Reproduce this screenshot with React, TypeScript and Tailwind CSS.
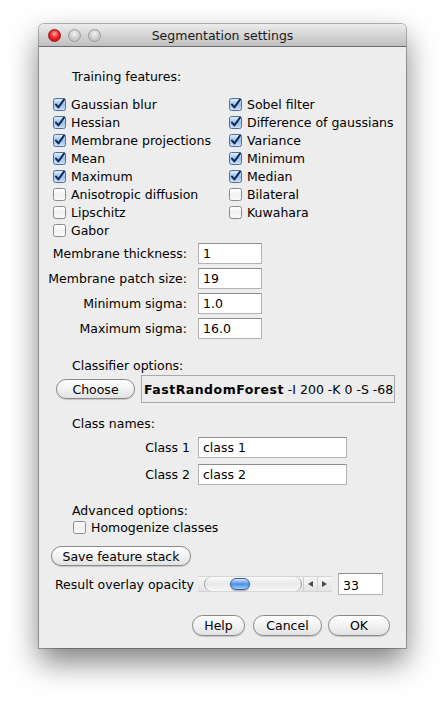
import React from "react"

const font = { fontFamily: '"DejaVu Sans", "Lucida Grande", Verdana, sans-serif' }

function CheckBox({ checked }: { checked: boolean }) {
  return (
    <svg width="13" height="13" viewBox="0 0 13 13" className="shrink-0">
      <defs>
        <linearGradient id="cbOn" x1="0" y1="0" x2="0" y2="1">
          <stop offset="0" stopColor="#e4effb" />
          <stop offset="0.5" stopColor="#9cc2ec" />
          <stop offset="1" stopColor="#cfe3f8" />
        </linearGradient>
        <linearGradient id="cbOff" x1="0" y1="0" x2="0" y2="1">
          <stop offset="0" stopColor="#ffffff" />
          <stop offset="0.5" stopColor="#f1f1f1" />
          <stop offset="1" stopColor="#fbfbfb" />
        </linearGradient>
      </defs>
      <rect
        x="0.5"
        y="0.5"
        width="12"
        height="12"
        rx="2"
        fill={checked ? "url(#cbOn)" : "url(#cbOff)"}
        stroke={checked ? "#50709a" : "#8a8a8a"}
      />
      {checked && (
        <path
          d="M3 6.6 L5.4 9.4 L11 1.6"
          fill="none"
          stroke="#0f2a58"
          strokeWidth="2"
          strokeLinecap="round"
          strokeLinejoin="round"
        />
      )}
    </svg>
  )
}

function Check({ label, checked }: { label: string; checked: boolean }) {
  return (
    <div className="flex items-center gap-[5px] h-[18px] whitespace-nowrap">
      <CheckBox checked={checked} />
      <span>{label}</span>
    </div>
  )
}

function AquaButton({ label, className }: { label: string; className: string }) {
  return (
    <div
      className={
        "flex items-center justify-center rounded-full border border-[#8a8a8a] bg-gradient-to-b from-[#ffffff] via-[#f2f2f2] to-[#e2e2e2] shadow-[0_1px_1px_rgba(0,0,0,0.18)] text-black " +
        className
      }
    >
      {label}
    </div>
  )
}

function Field({ value, className }: { value: string; className: string }) {
  return (
    <div
      className={
        "bg-white border border-[#b4b4b4] border-t-[#8e8e8e] pl-[4px] flex items-center text-black " + className
      }
    >
      {value}
    </div>
  )
}

function Light({ color }: { color: "red" | "gray" }) {
  return (
    <div
      className={
        color === "red"
          ? "w-[13px] h-[13px] rounded-full border border-[#8e1a1a] bg-[radial-gradient(circle_at_50%_35%,#ffb3b3_0%,#f02424_45%,#b80b0b_100%)]"
          : "w-[13px] h-[13px] rounded-full border border-[#9a9a9a] bg-[radial-gradient(circle_at_50%_35%,#f2f2f2_0%,#cfcfcf_50%,#b8b8b8_100%)]"
      }
    />
  )
}

const left = [
  ["Gaussian blur", true],
  ["Hessian", true],
  ["Membrane projections", true],
  ["Mean", true],
  ["Maximum", true],
  ["Anisotropic diffusion", false],
  ["Lipschitz", false],
  ["Gabor", false],
] as const

const right = [
  ["Sobel filter", true],
  ["Difference of gaussians", true],
  ["Variance", true],
  ["Minimum", true],
  ["Median", true],
  ["Bilateral", false],
  ["Kuwahara", false],
] as const

export default function App() {
  return (
    <div className="w-[446px] h-[703px] bg-white pt-[24px] pl-[39px] text-[12.5px] leading-[15px] text-black" style={font}>
      <div className="w-[367px] h-[624px] flex flex-col rounded-t-[5px] overflow-hidden shadow-[0_0_0_1px_rgba(0,0,0,0.28),0_14px_30px_rgba(0,0,0,0.5)]">
        {/* title bar */}
        <div className="h-[23px] shrink-0 grid grid-cols-[1fr_auto_1fr] items-center bg-gradient-to-b from-[#ececec] to-[#bfbfbf] border-b border-[#6a6a6a]">
          <div className="flex items-center gap-[7px] pl-[9px]">
            <Light color="red" />
            <Light color="gray" />
            <Light color="gray" />
          </div>
          <div className="text-[#1a1a1a] pt-[1px]">Segmentation settings</div>
          <div />
        </div>

        {/* body */}
        <div className="flex-1 bg-[#ededed] flex flex-col">
          <div className="mt-[22px] ml-[33px]">Training features:</div>

          <div className="mt-[11px] ml-[14px] grid grid-cols-[176px_auto]">
            <div className="flex flex-col">
              {left.map(([l, c]) => (
                <Check key={l} label={l} checked={c} />
              ))}
            </div>
            <div className="flex flex-col">
              {right.map(([l, c]) => (
                <Check key={l} label={l} checked={c} />
              ))}
            </div>
          </div>

          <div className="mt-[4px] grid grid-cols-[148px_64px] gap-x-[11px] gap-y-[4px] items-center">
            <div className="text-right whitespace-nowrap">Membrane thickness:</div>
            <Field value="1" className="h-[21px]" />
            <div className="text-right whitespace-nowrap">Membrane patch size:</div>
            <Field value="19" className="h-[21px]" />
            <div className="text-right whitespace-nowrap">Minimum sigma:</div>
            <Field value="1.0" className="h-[21px]" />
            <div className="text-right whitespace-nowrap">Maximum sigma:</div>
            <Field value="16.0" className="h-[21px]" />
          </div>

          <div className="mt-[19px] ml-[33px]">Classifier options:</div>

          <div className="mt-[2px] ml-[17px] flex items-center gap-[6px] h-[28px]">
            <AquaButton label="Choose" className="w-[79px] h-[20px]" />
            <div className="w-[254px] h-[28px] border border-[#a9a9a9] bg-[#ededed] flex items-center pl-[2px] overflow-hidden whitespace-nowrap">
              <span className="font-bold tracking-[0.5px]">FastRandomForest</span>
              <span>&nbsp;-I 200 -K 0 -S -686</span>
            </div>
          </div>

          <div className="mt-[13px] ml-[33px]">Class names:</div>

          <div className="mt-[6px] grid grid-cols-[151px_149px] gap-x-[8px] gap-y-[6px] items-center">
            <div className="text-right">Class 1</div>
            <Field value="class 1" className="h-[21px]" />
            <div className="text-right">Class 2</div>
            <Field value="class 2" className="h-[21px]" />
          </div>

          <div className="mt-[18px] ml-[33px]">Advanced options:</div>
          <div className="ml-[34px]">
            <Check label="Homogenize classes" checked={false} />
          </div>

          <div className="mt-[10px] ml-[12px]">
            <AquaButton label="Save feature stack" className="w-[140px] h-[20px]" />
          </div>

          <div className="mt-[7px] ml-[16px] flex items-center h-[22px]">
            <div className="w-[143px] whitespace-nowrap">Result overlay opacity</div>
            <div className="w-[134px] h-[16px] flex items-center bg-gradient-to-b from-[#f6f6f6] to-[#e4e4e4] border-y border-[#d4d4d4]">
              <div className="ml-[6px] w-[98px] h-[14px] rounded-full border-x border-[#9a9a9a] bg-gradient-to-b from-[#fafafa] via-[#e9e9e9] to-[#f7f7f7] flex items-center">
                <div className="ml-[25px] w-[20px] h-[12px] rounded-full border border-[#3a62a8] bg-gradient-to-b from-[#d4e6fb] via-[#4d8fe2] to-[#9dd0ff] shadow-[0_1px_1px_rgba(0,0,0,0.3)]" />
              </div>
              <div className="ml-[1px] flex items-center h-full">
                <div className="w-[14px] h-full flex items-center justify-center border-l border-[#cfcfcf]">
                  <svg width="5" height="6" viewBox="0 0 5 6">
                    <path d="M5 0 L0 3 L5 6 Z" fill="#4a4a4a" />
                  </svg>
                </div>
                <div className="w-[14px] h-full flex items-center justify-center border-l border-[#cfcfcf]">
                  <svg width="5" height="6" viewBox="0 0 5 6">
                    <path d="M0 0 L5 3 L0 6 Z" fill="#4a4a4a" />
                  </svg>
                </div>
              </div>
            </div>
            <Field value="33" className="ml-[6px] w-[45px] h-[22px] pt-[3px]" />
          </div>

          <div className="mt-[20px] ml-[153px] flex items-center">
            <AquaButton label="Help" className="w-[53px] h-[21px]" />
            <AquaButton label="Cancel" className="ml-[8px] w-[69px] h-[21px]" />
            <AquaButton label="OK" className="ml-[6px] w-[62px] h-[21px]" />
          </div>
        </div>
      </div>
    </div>
  )
}
